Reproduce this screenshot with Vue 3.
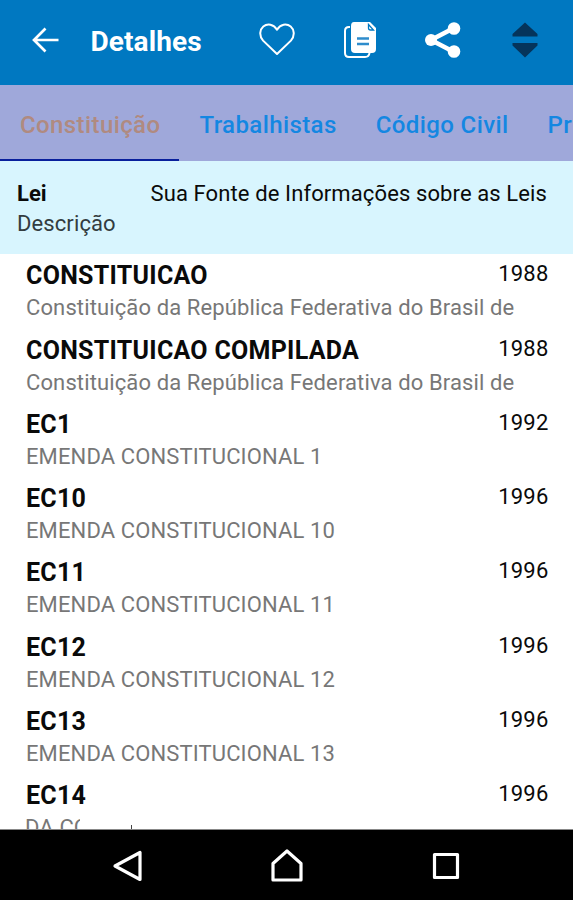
<template>
  <div class="screen">
    <header class="toolbar">
      <svg class="back" viewBox="0 0 28 28" fill="none" stroke="#fff" stroke-width="2.7">
        <path d="M14.5 2.5L3 14L14.5 25.5M3 14H27.5" />
      </svg>
      <h1 class="title">Detalhes</h1>
      <div class="actions">
        <svg class="heart" viewBox="0 0 36 34" fill="none" stroke="#fff" stroke-width="2" stroke-linejoin="round">
          <path d="M18 31L4.1 17.6C-.2 12.8 .8 6.6 4.3 3.6C8.5 .1 14.6 1.1 18 6.7C21.4 1.1 27.5 .1 31.7 3.6C35.2 6.6 36.2 12.8 31.9 17.6Z" />
        </svg>
        <svg class="copy" viewBox="0 0 32 36">
          <path d="M6 5H5Q1 5 1 9V31Q1 35 5 35H21Q25 35 25.5 31" fill="none" stroke="#fff" stroke-width="2" />
          <path d="M10 0H26L32 6V27Q32 31 28 31H11Q7 31 7 27V4Q7 0 10 0Z" fill="#fff" />
          <path d="M24.5 2.5V6Q24.5 8 26.5 8H29.5Z" fill="none" stroke="#0078c1" stroke-width="1.3" />
          <path d="M13 16.5H25M13 22H25" stroke="#2e8ccc" stroke-width="2.4" />
        </svg>
        <svg class="share" viewBox="0 0 36 36" fill="#fff">
          <path d="M29 6L6 18L29 30" fill="none" stroke="#fff" stroke-width="4.6" />
          <circle cx="6" cy="18" r="6" />
          <circle cx="29" cy="6.5" r="6.3" />
          <circle cx="29" cy="29.5" r="6.3" />
        </svg>
        <svg class="sort" viewBox="0 0 26 36" fill="#05345b">
          <path d="M13 0.5L25.5 12V14.5H.5V12ZM.5 21H25.5V23.5L13 35.5L.5 23.5Z" />
        </svg>
      </div>
    </header>

    <nav class="tabs">
      <a v-for="tab in tabs" :key="tab" class="tab" :class="{ active: tab === selected }" @click="selected = tab">{{ tab }}</a>
    </nav>

    <section class="legend">
      <div class="legend-row">
        <strong>Lei</strong>
        <span class="slogan">Sua Fonte de Informações sobre as Leis</span>
      </div>
      <div class="legend-desc">Descrição</div>
    </section>

    <main class="list">
      <article v-for="law in laws" :key="law.name" class="law">
        <div class="law-text">
          <h2 class="law-name">{{ law.name }}</h2>
          <p class="law-desc" :class="{ partial: law.partial }">{{ law.description }}</p>
        </div>
        <span class="law-year">{{ law.year }}</span>
      </article>
      <div class="tick"></div>
    </main>

    <footer class="navbar">
      <svg viewBox="0 0 34 34"><path d="M29 3.5V30.5L4 17Z" /></svg>
      <svg viewBox="0 0 34 34"><path d="M3 31V14.5L17 2L31 14.5V31Z" /></svg>
      <svg viewBox="0 0 34 34"><path d="M5.5 5.5H28.5V28.5H5.5Z" /></svg>
    </footer>
  </div>
</template>

<script setup>
import { ref } from 'vue'

const tabs = ['Constituição', 'Trabalhistas', 'Código Civil', 'Pr']
const selected = ref('Constituição')

const laws = [
  { name: 'CONSTITUICAO', description: 'Constituição da República Federativa do Brasil de', year: 1988 },
  { name: 'CONSTITUICAO COMPILADA', description: 'Constituição da República Federativa do Brasil de', year: 1988 },
  { name: 'EC1', description: 'EMENDA CONSTITUCIONAL 1', year: 1992 },
  { name: 'EC10', description: 'EMENDA CONSTITUCIONAL 10', year: 1996 },
  { name: 'EC11', description: 'EMENDA CONSTITUCIONAL 11', year: 1996 },
  { name: 'EC12', description: 'EMENDA CONSTITUCIONAL 12', year: 1996 },
  { name: 'EC13', description: 'EMENDA CONSTITUCIONAL 13', year: 1996 },
  { name: 'EC14', description: 'DA CC', year: 1996, partial: true }
]
</script>

<style>
body {
  margin: 0;
}
</style>

<style scoped>
.screen {
  display: flex;
  flex-direction: column;
  width: 573px;
  height: 900px;
  overflow: hidden;
  background: #fff;
  color: #0a0a0a;
  font-family: Roboto, 'Liberation Sans', sans-serif;
}

.toolbar {
  display: flex;
  flex: none;
  align-items: center;
  box-sizing: border-box;
  height: 85px;
  padding: 0 35.5px 5px 31px;
  background: #0078c1;
}

.back {
  width: 28px;
  height: 28px;
}

.title {
  margin: 4px 0 0 31.5px;
  color: #fff;
  font-size: 28px;
  font-weight: 700;
  line-height: 34px;
  letter-spacing: 0.1px;
}

.actions {
  display: flex;
  align-items: center;
  margin-left: auto;
}

.heart {
  width: 36px;
  height: 34px;
}

.copy {
  width: 32px;
  height: 36px;
  margin-left: 49px;
}

.share {
  width: 36px;
  height: 36px;
  margin-left: 49px;
}

.sort {
  width: 26px;
  height: 36px;
  margin-left: 51px;
}

.tabs {
  display: flex;
  flex: none;
  height: 76px;
  overflow: hidden;
  background: #9fa8da;
}

.tab {
  flex: none;
  box-sizing: border-box;
  height: 76px;
  padding: 0 19px 0 20px;
  color: #1487e2;
  font-size: 24px;
  font-weight: 500;
  line-height: 80px;
  letter-spacing: 0.4px;
}

.active {
  border-bottom: 2px solid #081f9c;
  color: #b08a80;
}

.legend {
  flex: none;
  box-sizing: border-box;
  height: 92.5px;
  padding: 18px 26px 0 17px;
  background: #d8f5fe;
  font-size: 22px;
  line-height: 30px;
}

.legend-row {
  display: flex;
  justify-content: space-between;
}

.slogan {
  letter-spacing: 0.11px;
}

.legend-desc {
  color: #333c40;
  letter-spacing: 0.1px;
}

.list {
  position: relative;
  flex: none;
  height: 575.5px;
  overflow: hidden;
  border-bottom: 1px solid #888;
}

.law {
  display: flex;
  height: 74.3px;
  padding: 0 24.5px 0 26px;
}

.law-text {
  flex: 1;
  min-width: 0;
}

.law-name {
  margin: 6.8px 0 0;
  font-size: 25px;
  font-weight: 700;
  line-height: 32px;
  letter-spacing: 0.28px;
}

.law-desc {
  margin: 0;
  color: #777;
  font-size: 22px;
  line-height: 32px;
  letter-spacing: 0.12px;
  white-space: nowrap;
}

.partial {
  width: 55px;
  margin-left: -1px;
  overflow: hidden;
}

.law-year {
  margin-top: 4.8px;
  font-size: 22px;
  line-height: 32px;
  letter-spacing: 0.2px;
}

/* top of a letter cut off by the navigation bar */
.tick {
  position: absolute;
  bottom: 0;
  left: 131px;
  width: 1px;
  height: 4px;
  background: #444;
}

.navbar {
  display: flex;
  flex: 1;
  justify-content: center;
  gap: 125px;
  padding-top: 19px;
  background: #000;
}

.navbar svg {
  width: 34px;
  height: 34px;
  fill: none;
  stroke: #fff;
  stroke-width: 3.2;
  stroke-linejoin: round;
}
</style>
